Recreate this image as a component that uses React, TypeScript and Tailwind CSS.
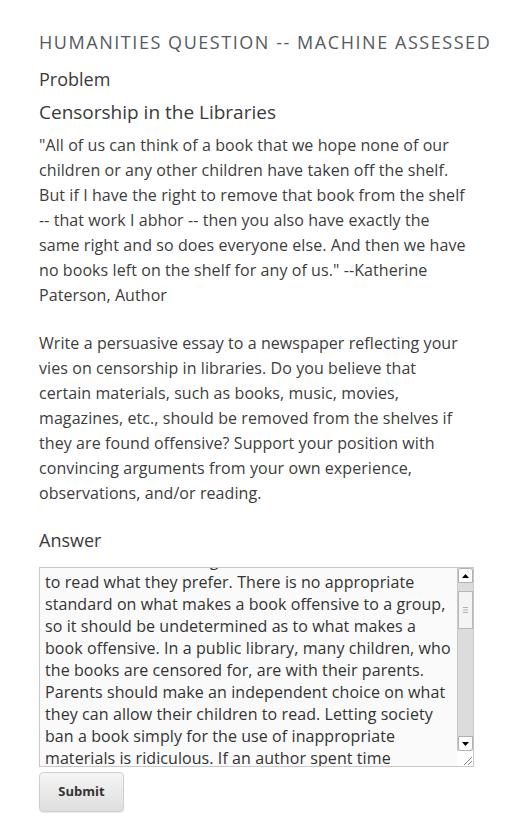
import React from "react";

const answerLines = [
  "each reader has the right and the freedom",
  "to read what they prefer. There is no appropriate",
  "standard on what makes a book offensive to a group,",
  "so it should be undetermined as to what makes a",
  "book offensive. In a public library, many children, who",
  "the books are censored for, are with their parents.",
  "Parents should make an independent choice on what",
  "they can allow their children to read. Letting society",
  "ban a book simply for the use of inappropriate",
  "materials is ridiculous. If an author spent time",
  "writing a book, it deserves to be on the shelf.",
];

export default function App() {
  return (
    <div
      className="min-h-[819px] w-[507px] bg-white text-[#3d3d3d]"
      style={{ fontFamily: '"Open Sans", "Noto Sans", sans-serif' }}
    >
      <div className="pl-[39px] pt-[31px]">
        <h2 className="whitespace-nowrap text-[18px] leading-[22px] uppercase tracking-[1.55px] text-[#555a60]">
          Humanities Question -- Machine Assessed
        </h2>
        <h3 className="mt-[14px] text-[18px] leading-[24px] text-[#3a3a3a]">Problem</h3>
        <h4 className="mt-[9px] text-[19px] leading-[24px] text-[#3a3a3a]">Censorship in the Libraries</h4>
        <div className="mt-[9px] w-[428px] text-[16px] leading-[25px] tracking-[0.08px]">
          <p>
            "All of us can think of a book that we hope none of our children or any other children have
            taken off the shelf. But if I have the right to remove that book from the shelf -- that work I
            abhor -- then you also have exactly the same right and so does everyone else. And then we have
            no books left on the shelf for any of us." --Katherine Paterson, Author
          </p>
          <p className="mt-[23px]">
            Write a persuasive essay to a newspaper reflecting your vies on censorship in libraries. Do you
            believe that certain materials, such as books, music, movies, magazines, etc., should be removed
            from the shelves if they are found offensive? Support your position with convincing arguments
            from your own experience, observations, and/or reading.
          </p>
        </div>
        <h3 className="mt-[22px] text-[18px] leading-[24px] text-[#3a3a3a]">Answer</h3>
        <div className="mt-[15px] flex h-[200px] w-[435px] border border-[#c8c8c8] bg-[#fafafa]">
          <div className="flex-1 overflow-hidden pl-[5px] text-[16px] leading-[22px] tracking-[0.08px] text-[#333]">
            <div className="-mt-[19px]">
              {answerLines.map((l, i) => (
                <div key={i} className="whitespace-nowrap">
                  {l}
                </div>
              ))}
            </div>
          </div>
          <div className="flex w-[16px] flex-col">
            <div className="flex flex-1 flex-col border-l border-[#c8c8c8] bg-[#dcdcdc]">
              <div className="flex h-[15px] items-center justify-center rounded-t-[3px] border border-[#b0b0b0] bg-white">
                <svg width="7" height="4" viewBox="0 0 7 4">
                  <path d="M0 4 L3.5 0 L7 4 Z" fill="#000" />
                </svg>
              </div>
              <div className="h-[8px]" />
              <div className="flex h-[38px] items-center justify-center border border-[#b8b8b8] bg-[#f4f4f4]">
                <svg width="5" height="6" viewBox="0 0 5 6">
                  <path d="M0 0.5 H5 M0 3 H5 M0 5.5 H5" stroke="#b0b0b0" strokeWidth="1" />
                </svg>
              </div>
              <div className="flex-1" />
              <div className="flex h-[15px] items-center justify-center rounded-b-[3px] border border-[#b0b0b0] bg-white">
                <svg width="7" height="4" viewBox="0 0 7 4">
                  <path d="M0 0 L3.5 4 L7 0 Z" fill="#000" />
                </svg>
              </div>
            </div>
            <div className="flex h-[15px] items-end justify-end bg-white p-[1px]">
              <svg width="9" height="9" viewBox="0 0 9 9">
                <path d="M9 1 L1 9 M9 5 L5 9" stroke="#888" strokeWidth="1" />
              </svg>
            </div>
          </div>
        </div>
        <button className="mt-[5px] h-[40px] w-[85px] rounded-[4px] border border-[#cfcfcf] bg-gradient-to-b from-[#f5f5f5] to-[#dedede] text-[13px] font-bold text-[#333] shadow-[0_1px_1px_rgba(0,0,0,0.08)]">
          Submit
        </button>
      </div>
    </div>
  );
}
